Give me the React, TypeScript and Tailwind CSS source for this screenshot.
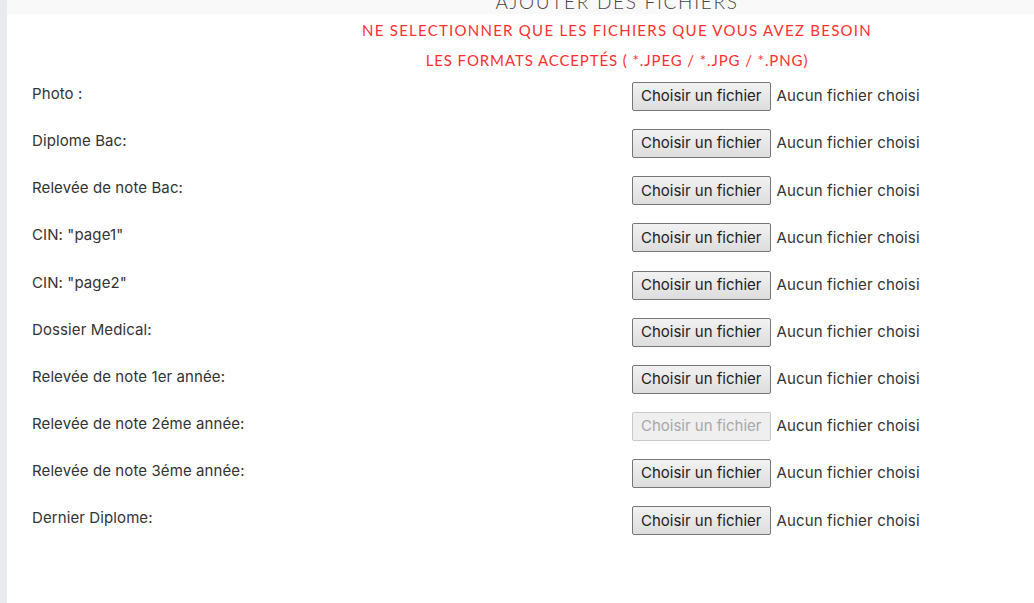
import React from "react";

const rows: { label: string; disabled?: boolean }[] = [
  { label: "Photo :" },
  { label: "Diplome Bac:" },
  { label: "Relevée de note Bac:" },
  { label: 'CIN: "page1"' },
  { label: 'CIN: "page2"' },
  { label: "Dossier Medical:" },
  { label: "Relevée de note 1er année:" },
  { label: "Relevée de note 2éme année:", disabled: true },
  { label: "Relevée de note 3éme année:" },
  { label: "Dernier Diplome:" },
];

function FileField({ disabled }: { disabled?: boolean }) {
  return (
    <div className="flex items-center">
      <span
        className={
          disabled
            ? "h-[29px] pl-[8px] pr-[9px] flex items-center border border-[#c8c8c8] bg-[#efefef] text-[#a8a8a8] rounded-[2px] text-[15px]"
            : "h-[29px] pl-[8px] pr-[9px] flex items-center border border-[#767676] bg-gradient-to-b from-[#f2f2f2] to-[#dddddd] text-[#222] rounded-[2px] text-[15px]"
        }
      >
        Choisir un fichier
      </span>
      <span className="ml-[5px] text-[15px] tracking-[0.15px] text-[#333]">Aucun fichier choisi</span>
    </div>
  );
}

export default function App() {
  return (
    <div className="w-[1034px] h-[603px] flex bg-white overflow-hidden" style={{ fontFamily: "Inter, 'Noto Sans', sans-serif" }}>
      <div className="w-[7px] shrink-0 bg-[#e9eaee]" />
      <div className="flex-1 flex flex-col">
        <div className="h-[14px] bg-[#f9f9f9] overflow-hidden flex justify-center pl-[200px] pr-[7px]">
          <div
            className="text-[19px] leading-[19px] -mt-[8px] text-[#444] font-light tracking-[1.7px]"
            style={{ fontFamily: "Lato, sans-serif" }}
          >
            AJOUTER DES FICHIERS
          </div>
        </div>
        <div
          className="flex flex-col items-center pl-[200px] pr-[7px] text-[#ff3030] text-[15px] leading-[20px]"
          style={{ fontFamily: "Lato, sans-serif" }}
        >
          <div className="mt-[6px] tracking-[1.25px]">NE SELECTIONNER QUE LES FICHIERS QUE VOUS AVEZ BESOIN</div>
          <div className="mt-[10px] tracking-[0.9px]">LES FORMATS ACCEPTÉS ( *.JPEG / *.JPG / *.PNG)</div>
        </div>
        <div className="mt-[12px] flex flex-col gap-[18.15px]">
          {rows.map((r) => (
            <div key={r.label} className="flex items-start">
              <div className="w-[625px] pl-[25px] text-[15px] leading-[23px] tracking-[0.1px] text-[#333]">{r.label}</div>
              <FileField disabled={r.disabled} />
            </div>
          ))}
        </div>
      </div>
    </div>
  );
}
